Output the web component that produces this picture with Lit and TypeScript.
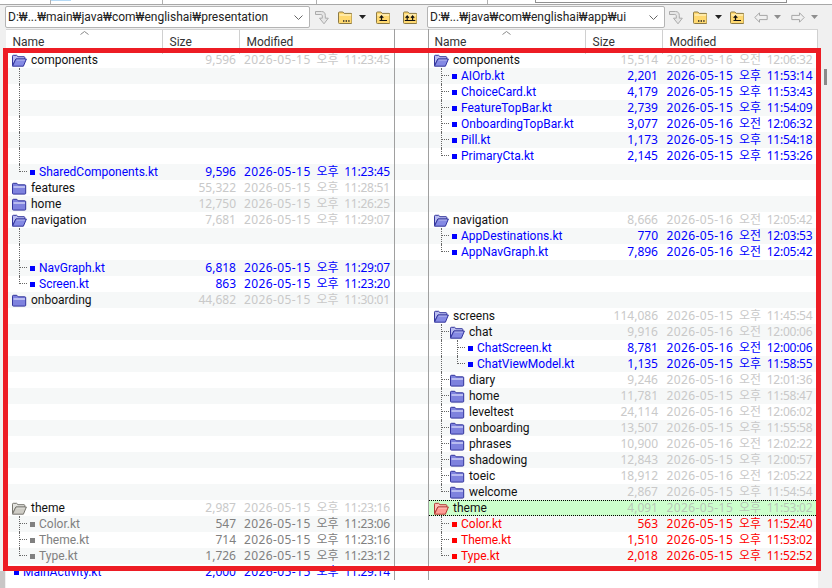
import { LitElement, html, css, svg } from "lit";
import { customElement, property } from "lit/decorators.js";

type Row = {
  n?: string; // label
  s?: string; // size
  d?: string; // date
  k?: "open" | "closed" | "file"; // type
  c?: "blue" | "gray" | "red" | "normal"; // tone
  g?: string; // guides per depth: "|" through, "L" elbow
  sel?: boolean;
};

const blank = (g = ""): Row => ({ g });
const blanks = (count: number, g = ""): Row[] => Array.from({ length: count }, () => blank(g));
const f = (n: string, s: string, d: string, k: "open" | "closed", g = "", c: Row["c"] = "normal", sel = false): Row => ({ n, s, d, k, g, c, sel });
const file = (n: string, s: string, d: string, g: string, c: Row["c"] = "blue"): Row => ({ n, s, d, k: "file", g, c });

const PM = "오후";
const AM = "오전";

const leftRows: Row[] = [
  f("components", "9,596", `2026-05-15 ${PM} 11:23:45`, "open"),
  ...blanks(6, "|"),
  file("SharedComponents.kt", "9,596", `2026-05-15 ${PM} 11:23:45`, "L"),
  f("features", "55,322", `2026-05-15 ${PM} 11:28:51`, "closed"),
  f("home", "12,750", `2026-05-15 ${PM} 11:26:25`, "closed"),
  f("navigation", "7,681", `2026-05-15 ${PM} 11:29:07`, "open"),
  ...blanks(2, "|"),
  file("NavGraph.kt", "6,818", `2026-05-15 ${PM} 11:29:07`, "|"),
  file("Screen.kt", "863", `2026-05-15 ${PM} 11:23:20`, "L"),
  f("onboarding", "44,682", `2026-05-15 ${PM} 11:30:01`, "closed"),
  ...blanks(12),
  f("theme", "2,987", `2026-05-15 ${PM} 11:23:16`, "open", "", "gray"),
  file("Color.kt", "547", `2026-05-15 ${PM} 11:23:06`, "|", "gray"),
  file("Theme.kt", "714", `2026-05-15 ${PM} 11:23:16`, "|", "gray"),
  file("Type.kt", "1,726", `2026-05-15 ${PM} 11:23:12`, "L", "gray"),
  file("MainActivity.kt", "2,000", `2026-05-15 ${PM} 11:29:14`, ""),
];

const rightRows: Row[] = [
  f("components", "15,514", `2026-05-16 ${AM} 12:06:32`, "open"),
  file("AIOrb.kt", "2,201", `2026-05-15 ${PM} 11:53:14`, "|"),
  file("ChoiceCard.kt", "4,179", `2026-05-15 ${PM} 11:53:43`, "|"),
  file("FeatureTopBar.kt", "2,739", `2026-05-15 ${PM} 11:54:09`, "|"),
  file("OnboardingTopBar.kt", "3,077", `2026-05-16 ${AM} 12:06:32`, "|"),
  file("Pill.kt", "1,173", `2026-05-15 ${PM} 11:54:18`, "|"),
  file("PrimaryCta.kt", "2,145", `2026-05-15 ${PM} 11:53:26`, "L"),
  ...blanks(3),
  f("navigation", "8,666", `2026-05-16 ${AM} 12:05:42`, "open"),
  file("AppDestinations.kt", "770", `2026-05-16 ${AM} 12:03:53`, "|"),
  file("AppNavGraph.kt", "7,896", `2026-05-16 ${AM} 12:05:42`, "L"),
  ...blanks(3),
  f("screens", "114,086", `2026-05-15 ${PM} 11:45:54`, "open"),
  f("chat", "9,916", `2026-05-16 ${AM} 12:00:06`, "open", "|"),
  file("ChatScreen.kt", "8,781", `2026-05-16 ${AM} 12:00:06`, "||"),
  file("ChatViewModel.kt", "1,135", `2026-05-15 ${PM} 11:58:55`, "|L"),
  f("diary", "9,246", `2026-05-16 ${AM} 12:01:36`, "closed", "|"),
  f("home", "11,781", `2026-05-15 ${PM} 11:58:47`, "closed", "|"),
  f("leveltest", "24,114", `2026-05-16 ${AM} 12:06:02`, "closed", "|"),
  f("onboarding", "13,507", `2026-05-15 ${PM} 11:55:58`, "closed", "|"),
  f("phrases", "10,900", `2026-05-16 ${AM} 12:02:22`, "closed", "|"),
  f("shadowing", "12,843", `2026-05-15 ${PM} 12:00:57`, "closed", "|"),
  f("toeic", "18,912", `2026-05-16 ${AM} 12:05:22`, "closed", "|"),
  f("welcome", "2,867", `2026-05-15 ${PM} 11:54:54`, "closed", "L"),
  f("theme", "4,091", `2026-05-15 ${PM} 11:53:02`, "open", "", "red", true),
  file("Color.kt", "563", `2026-05-15 ${PM} 11:52:40`, "|", "red"),
  file("Theme.kt", "1,510", `2026-05-15 ${PM} 11:53:02`, "|", "red"),
  file("Type.kt", "2,018", `2026-05-15 ${PM} 11:52:52`, "L", "red"),
  blank(),
];

const palette = {
  normal: ["#b9bcf0", "#7e82de", "#33359c", "#858ae4"],
  gray: ["#e4e4e0", "#b8b6ae", "#77756e", "#cfcdc6"],
  red: ["#ffc0b8", "#f07a70", "#b03a34", "#ff9d94"],
};

function folderIcon(open: boolean, tone: "normal" | "gray" | "red") {
  const [light, mid, dark, front] = palette[tone];
  return open
    ? html`<svg class="ficon" viewBox="0 0 16 13" width="16" height="13">
        <path d="M1.500 11.500V2.200c0-.6.3-.9.9-.9h3.200l1.400 1.400h6c.5 0 .8.3.8.8v1.600H5L1.500 11.500z" fill="${light}" stroke="${dark}" stroke-width="1"/>
        <path d="M1.500 12.200 4.800 5h10.600l-3 7.200z" fill="${front}" stroke="${dark}" stroke-width="1"/>
        <path d="M5.500 6h8.500" stroke="#fff" stroke-opacity=".45"/>
      </svg>`
    : html`<svg class="ficon" viewBox="0 0 16 13" width="16" height="13">
        <path d="M1.500 11.200V2.200c0-.6.3-.9.9-.9h3.400l1.400 1.500h6.600c.6 0 .9.3.9.9v7.500c0 .6-.3.9-.9.9H2.400c-.6 0-.9-.3-.9-.9z" fill="${mid}" stroke="${dark}"/>
        <path d="M2.500 5h11.500" stroke="${light}" stroke-width="2"/>
      </svg>`;
}

const yellowBody = svg`<path d="M.5 11.500V2c0-.6.3-1 1-1h3.400l1.300 1.400h6.800c.7 0 1 .4 1 1v8.100c0 .7-.3 1-1 1H1.500c-.7 0-1-.3-1-1z" fill="#ffd971" stroke="#8c7a45"/><path d="M1.500 4h11.600" stroke="#fff1bf" stroke-width="1.400"/>`;

const folderDots = html`<svg class="tool" width="14" height="13" viewBox="0 0 14 13">${yellowBody}<path d="M5 10h1.400M7.600 10H9M10.200 10h1.400" stroke="#222" stroke-width="1.600"/></svg>`;
const folderUp = html`<svg class="tool" width="14" height="13" viewBox="0 0 14 13">${yellowBody}<path d="M3.500 9.500h7.500M5.500 9.500V5.200M3.700 6.800l1.800-2 1.800 2" fill="none" stroke="#111" stroke-width="1.200"/></svg>`;
const folderUpUp = html`<svg class="tool" width="14" height="13" viewBox="0 0 14 13">${yellowBody}<path d="M1.800 9.500h10.500M4.200 9.500V5.200M2.600 6.800l1.600-2 1.600 2M9.600 9.500V5.200M8 6.800l1.600-2 1.600 2" fill="none" stroke="#111" stroke-width="1.100"/></svg>`;
const syncArrow = html`<svg class="tool" width="14" height="15" viewBox="0 0 14 15"><path d="M.5 1.500h6c2.500 0 3.800 1.400 3.800 4v2.700h3L9 13.800 4.500 8.200h2.800V6c0-1-.5-1.500-1.500-1.500H.5z" fill="#e6e6e6" stroke="#ababab"/></svg>`;
const drop = html`<svg class="drop" width="7" height="4" viewBox="0 0 7 4"><path d="M0 0h7L3.500 4z" fill="#222"/></svg>`;
const dropGray = html`<svg class="drop" width="7" height="4" viewBox="0 0 7 4"><path d="M0 0h7L3.500 4z" fill="#8e8e8e"/></svg>`;
const arrowL = html`<svg class="tool" width="14" height="11" viewBox="0 0 14 11"><path d="M5.500.8.800 5.500l4.700 4.700V7.600h7.700V3.400H5.500z" fill="#f0f0f0" stroke="#a6a6a6"/></svg>`;
const arrowR = html`<svg class="tool" width="14" height="11" viewBox="0 0 14 11"><path d="M8.500.8l4.700 4.700-4.700 4.700V7.600H.8V3.400h7.700z" fill="#f0f0f0" stroke="#a6a6a6"/></svg>`;

function dateParts(d: string | undefined) {
  if (!d) return "";
  const [ymd, ampm, hms] = d.split(" ");
  return html`<span class="ymd">${ymd}</span> ${ampm} <span class="hms">${hms}</span>`;
}

@customElement("file-pane")
class FilePane extends LitElement {
  @property({ attribute: false }) rows: Row[] = [];

  static styles = css`
    :host { display: block; background: #fff; height: 559px; position: relative; font-family: "Roboto", "Noto Sans CJK KR", sans-serif; }
    .head { display: grid; grid-template-columns: var(--cols); height: 23px; color: #333; font-size: 12px; line-height: 24px; border-top: 1px solid #d4d4d4; box-sizing: border-box; }
    .hc { padding-left: 6.5px; border-right: 1px solid #d0d0d0; position: relative; box-sizing: border-box; }
    .sort { position: absolute; left: 74px; top: 1px; width: 9px; height: 4px; }
    .row { display: grid; grid-template-columns: var(--cols); height: 16px; font-size: 12px; line-height: 16px; white-space: nowrap; box-sizing: border-box; }
    .row:nth-child(even) { background: #f6f8f8; }
    .row.sel { background: #ccffcc; outline: 1px dotted #000; outline-offset: -1px; }
    .name { display: flex; align-items: center; padding-left: 5px; min-width: 0; }
    .guide { flex: 0 0 16px; height: 16px; position: relative; }
    .guide.through::before, .guide.elbow::before { content: ""; position: absolute; left: 8px; top: 0; bottom: 0; border-left: 1px dotted #666; }
    .guide.elbow::before { bottom: 8px; }
    .guide.tee::after, .guide.elbow::after { content: ""; position: absolute; left: 8px; right: 0; top: 7px; border-top: 1px dotted #666; }
    .ficon { flex: none; margin-right: 4px; }
    .sq { flex: none; width: 5px; height: 5px; margin: 1px 4px 0 3px; background: currentColor; }
    .size, .date { font-family: "Noto Sans", "Noto Sans CJK KR", sans-serif; }
    .size { text-align: right; padding-right: var(--size-pad); }
    .date { padding-left: var(--date-pad); word-spacing: 2.6px; }
    .ymd { letter-spacing: 0.4px; }
    .hms { letter-spacing: -0.25px; }
    .folder .label { color: #111; }
    .folder .size, .folder .date { color: #c9c9c9; }
    .sel.folder .size, .sel.folder .date { color: #b9c9b9; }
    .file.blue { color: #0000ff; }
    .file.gray { color: #808080; }
    .file.red { color: #ff0000; }
    .rule { position: absolute; top: 0; right: var(--rule); bottom: 8px; border-right: 1px solid #a0a0a0; }
  `;

  private guides(g: string, hasContent: boolean) {
    return [...g].map((ch, i) => {
      const last = i === g.length - 1;
      const cls = ch === "L" ? "guide elbow" : last && hasContent ? "guide through tee" : "guide through";
      return html`<span class="${cls}"></span>`;
    });
  }

  render() {
    return html`
      <div class="head">
        <div class="hc">Name<svg class="sort" viewBox="0 0 9 4"><path d="M.5 3.500 4.500.5l4 3" fill="none" stroke="#888"/></svg></div>
        <div class="hc">Size</div>
        <div class="hc">Modified</div>
      </div>
      <div class="rows">
        ${this.rows.map((r) => {
          const folder = r.k === "open" || r.k === "closed";
          const tone = r.c ?? "normal";
          const cls = `row ${folder ? "folder" : "file"} ${tone} ${r.sel ? "sel" : ""}`;
          return html`<div class="${cls}">
            <div class="name">
              ${this.guides(r.g ?? "", !!r.k)}
              ${folder
                ? folderIcon(r.k === "open", tone as "normal" | "gray" | "red")
                : r.k === "file" ? html`<span class="sq"></span>` : ""}
              <span class="label">${r.n ?? ""}</span>
            </div>
            <div class="size">${r.s ?? ""}</div>
            <div class="date">${dateParts(r.d)}</div>
          </div>`;
        })}
      </div>
      <div class="rule"></div>
    `;
  }
}

@customElement("app-root")
class AppRoot extends LitElement {
  static styles = css`
    :host { display: block; width: 832px; height: 588px; overflow: hidden; position: relative; background: #f0f0f0; font-family: "Roboto", "Noto Sans CJK KR", sans-serif; }
    .sides { display: flex; height: 588px; }
    .side { display: flex; flex-direction: column; flex: none; }
    .side.a { width: 428px; padding-left: 6px; box-sizing: border-box; }
    .side.b { width: 390px; }
    .side.c { flex: 1; }
    .strip { height: 4px; border-bottom: 1px solid #a8a8a8; background: #fff; }
    .side.a .strip { margin-left: -6px; display: flex; }
    .cell { height: 4px; box-sizing: border-box; border-right: 1px solid #b0b0b0; }
    .cell.w1 { flex: 0 0 51px; }
    .cell.w2 { flex: 0 0 112px; }
    .cell.w3 { flex: 0 0 154px; }
    .hilite { flex: 0 0 20px; height: 1px; background: #b5d9f5; margin-right: -20px; }
    .strip.b { display: flex; }
    .cell.w4 { flex: 0 0 60px; }
    .box { flex: 0 0 252px; height: 3px; box-sizing: border-box; border: 1px solid #909090; border-top: 0; margin-left: 47px; }
    .bar { display: flex; align-items: center; height: 24px; }
    .addr { display: flex; align-items: center; height: 22px; box-sizing: border-box; background: #fff; border: 1px solid #b4b4b4; border-radius: 2px; font-size: 12px; color: #222; padding: 0 6px 0 2px; justify-content: space-between; white-space: nowrap; }
    .a .addr { width: 305px; margin-left: -1px; }
    .b .addr { width: 250px; margin-left: -1px; }
    .chev { flex: none; }
    .tools { display: flex; align-items: center; }
    .a .tools > :nth-child(1) { margin-left: 5px; }
    .a .tools > :nth-child(2) { margin-left: 9px; }
    .a .tools > :nth-child(3) { margin-left: 7px; }
    .a .tools > :nth-child(4) { margin-left: 10px; }
    .a .tools > :nth-child(5) { margin-left: 13px; }
    .b .tools > :nth-child(1) { margin-left: 4px; }
    .b .tools > :nth-child(2) { margin-left: 10px; }
    .b .tools > :nth-child(3) { margin-left: 8px; }
    .b .tools > :nth-child(4) { margin-left: 8px; }
    .b .tools > :nth-child(5) { margin-left: 10px; }
    .b .tools > :nth-child(6) { margin-left: 6px; }
    .b .tools > :nth-child(7) { margin-left: 10px; }
    .b .tools > :nth-child(8) { margin-left: 6px; }
    .a file-pane { --cols: 157px 77px 155px 33px; --rule: 33px; --size-pad: 4px; --date-pad: 4px; }
    .b file-pane { --cols: 158px 77px 155px; --rule: 389px; --size-pad: 5px; --date-pad: 3.5px; }
    .frame { position: absolute; left: 3px; top: 48px; width: 818px; height: 523px; border: 5px solid #ed1c24; box-sizing: border-box; pointer-events: none; }
    .thumb { position: absolute; left: 824px; top: 69px; width: 3px; height: 16px; background: #8a8a8a; }
    .edge { position: absolute; left: 0; top: 571px; width: 5px; height: 17px; background: #c9c6c6; }
  `;

  render() {
    const chev = html`<svg class="chev" width="9" height="5" viewBox="0 0 9 5"><path d="M.5.5l4 4 4-4" fill="none" stroke="#666"/></svg>`;
    return html`
      <div class="sides">
        <div class="side a">
          <div class="strip">
            <div class="cell w1"></div>
            <div class="hilite"></div>
            <div class="cell w2"></div>
            <div class="cell w3"></div>
          </div>
          <div class="bar">
            <div class="addr"><span>D:₩...₩main₩java₩com₩englishai₩presentation</span>${chev}</div>
            <div class="tools">${syncArrow}${folderDots}${drop}${folderUp}${folderUpUp}</div>
          </div>
          <file-pane .rows=${leftRows}></file-pane>
        </div>
        <div class="side b">
          <div class="strip b">
            <div class="cell w4"></div>
            <div class="box"></div>
          </div>
          <div class="bar">
            <div class="addr"><span>D:₩...₩java₩com₩englishai₩app₩ui</span>${chev}</div>
            <div class="tools">${syncArrow}${folderDots}${drop}${folderUp}${arrowL}${dropGray}${arrowR}${dropGray}</div>
          </div>
          <file-pane .rows=${rightRows}></file-pane>
        </div>
        <div class="side c"><div class="strip"></div></div>
      </div>
      <div class="edge"></div>
      <div class="thumb"></div>
      <div class="frame"></div>
    `;
  }
}
